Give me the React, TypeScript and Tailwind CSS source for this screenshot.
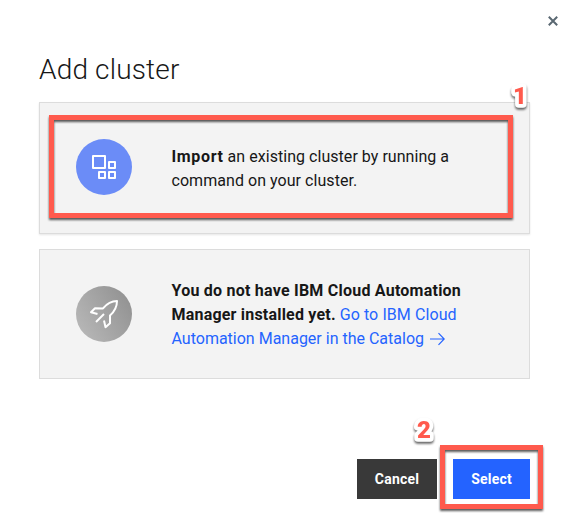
import type { ReactNode } from "react";

function Callout({ n, className }: { n: string; className: string }) {
  return (
    <svg className={`absolute overflow-visible ${className}`} width="20" height="26" viewBox="0 0 20 26">
      <text
        x="10"
        y="19.5"
        textAnchor="middle"
        className="fill-[#ff5a4d] stroke-white font-['Roboto',sans-serif] text-[24px] font-black drop-shadow-[0_2px_1px_rgba(0,0,0,0.6)]"
        strokeWidth="7.5"
        strokeLinejoin="round"
        paintOrder="stroke"
      >
        {n}
      </text>
    </svg>
  );
}

function Card({ icon, children, className }: { icon: ReactNode; children: ReactNode; className: string }) {
  return (
    <section className={`relative flex items-center border border-[#dcdcdc] bg-[#f3f3f3] pl-9 ${className}`}>
      {icon}
      <p className="mt-0.5 ml-[39.5px] text-base leading-6 whitespace-nowrap">{children}</p>
    </section>
  );
}

export default function App() {
  return (
    <main className="relative h-[523px] w-[567px] overflow-hidden bg-white pl-[39px] font-['Roboto',sans-serif] text-[#171717]">
      <header className="h-[102px] pr-[9px]">
        <div className="flex h-[50px] justify-end pt-4">
          <button aria-label="Close" className="h-[10px] w-[10px]">
            <svg width="10" height="10" viewBox="0 0 10 10" fill="none" stroke="#5a6872" strokeWidth="2">
              <path d="M.8.8 9.2 9.2M9.2.8.8 9.2" />
            </svg>
          </button>
        </div>
        <h1 className="text-[28px] leading-[39px] font-light tracking-[0.17px]">Add cluster</h1>
      </header>

      <Card
        className="h-[132px] w-[491px] shadow-[0_1px_2px_rgba(0,0,0,0.1)]"
        icon={
          <svg className="-mt-0.5" width="56" height="56" viewBox="0 0 56 56">
            <circle cx="28" cy="28" r="28" fill="#6b8cf7" />
            <g fill="none" stroke="#fff" strokeWidth="2" strokeLinejoin="round">
              <rect x="17" y="17" width="12" height="12" />
              <rect x="33" y="23" width="6" height="6" />
              <rect x="23" y="33" width="6" height="6" />
              <rect x="33" y="33" width="6" height="6" />
            </g>
          </svg>
        }
      >
        <span className="block">
          <b className="font-bold tracking-[0.65px]">Import</b>{" "}
          <span className="tracking-[0.04px]">an existing cluster by running a</span>
        </span>
        <span className="block tracking-[0.05px]">command on your cluster.</span>
        <span className="pointer-events-none absolute top-3 left-[9px] h-[103px] w-[464px] border-5 border-[#ff5a4d] drop-shadow-[0_2px_1px_rgba(0,0,0,0.65)]" />
        <Callout n="1" className="-top-[19px] left-[470px]" />
      </Card>

      <Card
        className="mt-[15px] h-[130px] w-[491px]"
        icon={
          <svg width="56" height="56" viewBox="0 0 56 56">
            <defs>
              <linearGradient id="gray" x1="0" y1="0.8" x2="1" y2="0.2">
                <stop offset="0" stopColor="#b8b8b8" />
                <stop offset="1" stopColor="#919191" />
              </linearGradient>
            </defs>
            <circle cx="28" cy="28" r="28" fill="url(#gray)" />
            <g fill="none" stroke="#fff" strokeWidth="2" strokeLinejoin="round">
              <path d="M21.5 28 15 26.3 19 22.2 27 22.4C31 17.5 35 15 41 15 41 21 38.5 25.5 34 29.5L34 37.2 29.5 41.2 28 34.5" />
              <path d="M28 28 20 36" />
            </g>
          </svg>
        }
      >
        <b className="block font-bold tracking-[0.23px]">You do not have IBM Cloud Automation</b>
        <span className="block">
          <b className="font-bold tracking-[0.2px]">Manager installed yet.</b>{" "}
          <a className="tracking-[0.08px] text-[#2463ff]">Go to IBM Cloud</a>
        </span>
        <a className="flex items-center text-[#2463ff]">
          <span>Automation Manager in the Catalog</span>
          <svg className="-mt-px ml-1.5" width="15" height="14" viewBox="0 0 15 14" fill="none" stroke="currentColor" strokeWidth="1.2">
            <path d="M0 7H14M8.5 1.2 14.2 7 8.5 12.8" />
          </svg>
        </a>
      </Card>

      <footer className="mt-20 flex h-10 w-[491px] justify-end gap-4 text-sm font-bold text-white">
        <button className="w-20 bg-[#393939] tracking-[0.2px]">Cancel</button>
        <div className="relative w-[77px]">
          <button className="h-10 w-[77px] bg-[#2463ff] tracking-[0.2px]">Select</button>
          <span className="pointer-events-none absolute -top-[14px] -left-[13px] h-[64px] w-[103px] border-5 border-[#ff5a4d] drop-shadow-[0_2px_1px_rgba(0,0,0,0.65)]" />
          <Callout n="2" className="-top-[41px] -left-[39px]" />
        </div>
      </footer>
    </main>
  );
}
